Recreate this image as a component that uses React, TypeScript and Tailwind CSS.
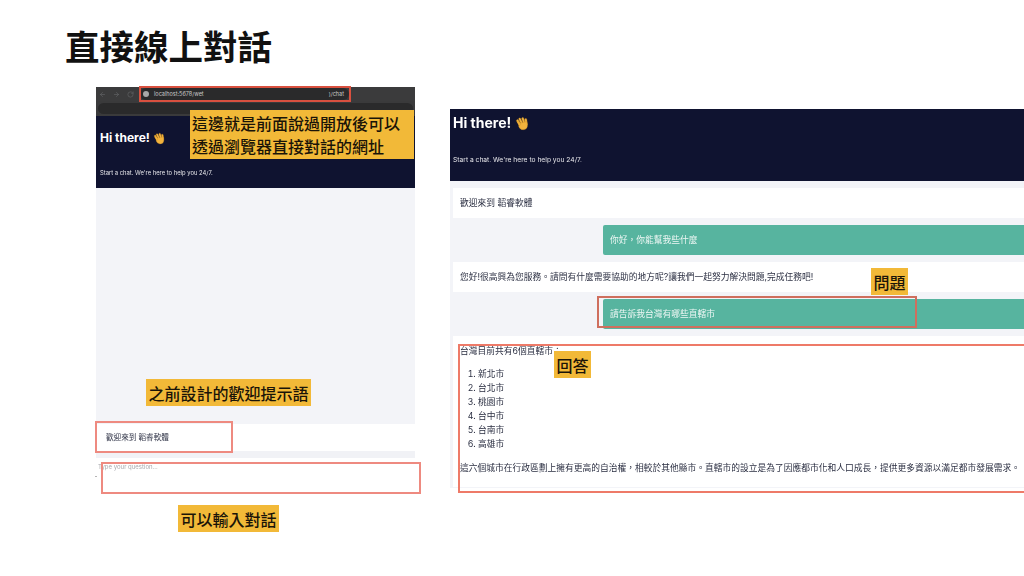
import { ArrowLeft, ArrowRight, RotateCw } from "lucide-react";

const cjk = { fontFamily: '"Noto Sans CJK TC", sans-serif' };
const ui = { fontFamily: 'Inter, "Noto Sans CJK TC", sans-serif' };

function Wave({ size }: { size: number }) {
  return (
    <svg width={size} height={size} viewBox="0 0 24 24" className="shrink-0">
      <g fill="#f2b33d" stroke="#c98a1e" strokeWidth="0.5">
        <rect x="4" y="5" width="3.4" height="11" rx="1.7" transform="rotate(-32 6 10)" />
        <rect x="8" y="2.5" width="3.4" height="12" rx="1.7" transform="rotate(-26 10 9)" />
        <rect x="12" y="2" width="3.4" height="12" rx="1.7" transform="rotate(-18 14 8)" />
        <rect x="16" y="4" width="3.4" height="11" rx="1.7" transform="rotate(-8 18 9)" />
        <path d="M6 12 L19 9 L20 16 Q19 22 13 22 Q8 22 6 17 Z" />
        <path d="M3 9 L7 16 L9 13 L5 8 Z" />
      </g>
    </svg>
  );
}

function Label({ text, className }: { text: string; className: string }) {
  return (
    <div
      className={`absolute flex items-center justify-center bg-[#f2b938] font-medium text-[#1a1408] ${className}`}
      style={cjk}
    >
      {text}
    </div>
  );
}

function Box({ className }: { className: string }) {
  return <div className={`absolute ${className}`} />;
}

const cities = ["新北市", "台北市", "桃園市", "台中市", "台南市", "高雄市"];

export default function App() {
  return (
    <div lang="zh-TW" className="relative h-[576px] w-[1024px] overflow-hidden bg-white" style={cjk}>
      <h1 className="absolute left-[65px] top-[20px] text-[34.5px] font-bold leading-[50px] text-[#111]">
        直接線上對話
      </h1>

      <div className="flex items-start pl-[96px] pt-[87px]">
        {/* Left chat screenshot */}
        <div className="flex h-[420px] w-[319px] flex-col blur-[0.35px]" style={ui}>
          <div className="flex h-[14px] items-center gap-[7px] bg-[#3b3b3c] pl-[3px] text-[#68696b]">
            <ArrowLeft size={7} />
            <ArrowRight size={7} />
            <RotateCw size={7} />
            <div className="ml-[-1px] flex h-[12px] w-[209px] items-center rounded-full bg-[#2a2a2b] pl-[3px] text-[5.5px] text-[#c8c8c8]">
              <span className="mr-[5px] h-[6px] w-[6px] rounded-full bg-[#a8a8a8]" />
              <span>localhost:5678/wet</span>
              <span className="ml-auto pr-[5px]">)/chat</span>
            </div>
          </div>
          <div className="flex h-[15px] items-center bg-[#3a3a3b] px-[2px]">
            <div className="h-[11px] w-full rounded-full bg-[#2a2a2b]" />
          </div>
          <div className="flex h-[72px] flex-col bg-[#0f1330] pl-[4px] text-white">
            <div className="mt-[13px] flex items-center gap-[3px] text-[12px] font-bold leading-[18px]">
              Hi there! <Wave size={13} />
            </div>
            <div className="mt-[21px] text-[5.85px] leading-[9px] text-[#e6e6ea]">
              Start a chat. We're here to help you 24/7.
            </div>
          </div>
          <div className="h-[236px] bg-[#f3f4f8]" />
          <div className="flex h-[27px] items-center bg-white pl-[10px] pt-px text-[7.6px] text-[#33374a]">
            歡迎來到 韜睿軟體
          </div>
          <div className="h-[7px] bg-[#f1f2f6]" />
          <div className="pl-[2px] pt-[4px] text-[6px] leading-[9px] text-[#a9a9ad]">
            Type your question...
          </div>
          <div className="ml-[-1px] mt-[5px] h-px w-[2px] bg-[#b5b5b5]" />
        </div>

        {/* Right chat screenshot */}
        <div className="ml-[35px] mt-[22px] flex h-[379px] w-[574px] flex-col blur-[0.35px]" style={ui}>
          <div className="flex h-[72px] flex-col bg-[#0f1330] pl-[3px] text-white">
            <div className="mt-[4px] flex items-center gap-[4px] text-[14px] font-bold leading-[20px]">
              Hi there! <Wave size={15} />
            </div>
            <div className="mt-[23px] text-[6.7px] leading-[9px] text-[#e6e6ea]">
              Start a chat. We're here to help you 24/7.
            </div>
          </div>
          <div className="flex flex-1 flex-col gap-[7px] bg-[#f3f4f8] pl-[3px] pt-[7px] text-[8.75px] text-[#2b2f42]">
            <div className="flex h-[30px] items-center bg-white pl-[7px] pt-[2px]">歡迎來到 韜睿軟體</div>
            <div className="ml-[150px] flex h-[30px] items-center rounded-l-[2px] bg-[#57b49f] pl-[7px] pt-[2px] text-[#eef7f4]">
              你好，你能幫我些什麼
            </div>
            <div className="flex h-[30px] items-center bg-white pl-[7px] pt-[2px]">
              您好!很高興為您服務。請問有什麼需要協助的地方呢?讓我們一起努力解決問題,完成任務吧!
            </div>
            <div className="ml-[150px] flex h-[30px] items-center rounded-l-[2px] bg-[#57b49f] pl-[7px] pt-px text-[#eef7f4]">
              請告訴我台灣有哪些直轄市
            </div>
            <div className="h-[151px] bg-white pl-[7px] pt-[8px] leading-[14px]">
              <p>台灣目前共有6個直轄市：</p>
              <ol className="ml-[18px] mt-[9px] list-decimal">
                {cities.map((c) => (
                  <li key={c}>{c}</li>
                ))}
              </ol>
              <p className="mt-[10px] whitespace-nowrap">
                這六個城市在行政區劃上擁有更高的自治權，相較於其他縣市。直轄市的設立是為了因應都市化和人口成長，提供更多資源以滿足都市發展需求。
              </p>
            </div>
          </div>
        </div>
      </div>

      <Box className="left-[139px] top-[86px] h-[16px] w-[212px] border-2 border-[#d9503f]" />
      <Box className="left-[95px] top-[421px] h-[32px] w-[138px] border-2 border-[#ee8a80]" />
      <Box className="left-[101px] top-[462px] h-[32px] w-[320px] border-2 border-[#ee8a80]" />
      <Box className="left-[597px] top-[296px] h-[32px] w-[320px] border-2 border-[#cf6f5e]" />
      <Box className="left-[458px] top-[344px] h-[149px] w-[580px] border-2 border-[#ee7a68]" />

      <div
        className="absolute left-[190px] top-[110px] flex h-[49px] w-[224px] flex-col justify-center bg-[#f2b938] pl-[2px] text-[16px] font-medium leading-[23px] text-[#1a1408]"
        style={cjk}
      >
        <div>這邊就是前面說過開放後可以</div>
        <div>透過瀏覽器直接對話的網址</div>
      </div>
      <Label text="之前設計的歡迎提示語" className="left-[146px] top-[379px] h-[27px] w-[165px] text-[16px]" />
      <Label text="可以輸入對話" className="left-[178px] top-[505px] h-[27px] w-[101px] text-[16px]" />
      <Label text="問題" className="left-[871px] top-[268px] h-[27px] w-[37px] text-[16px]" />
      <Label text="回答" className="left-[554px] top-[351px] h-[27px] w-[37px] text-[16px]" />
    </div>
  );
}
